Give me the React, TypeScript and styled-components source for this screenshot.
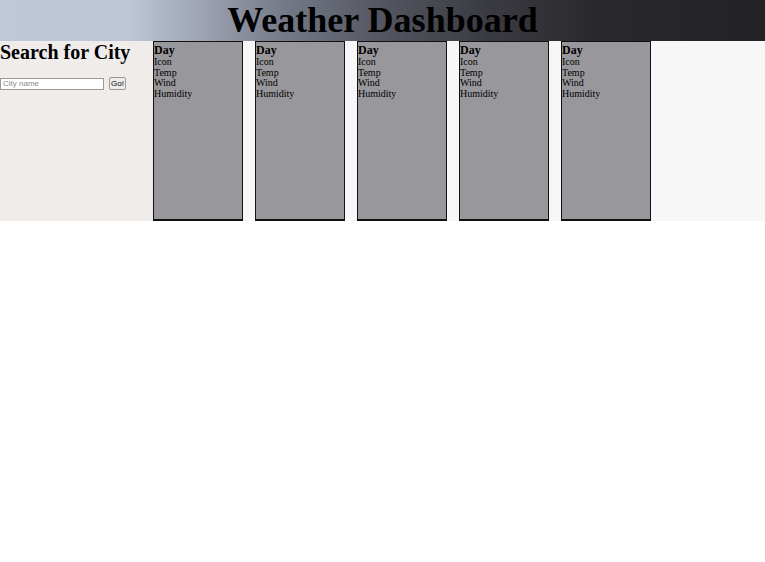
import React from "react";
import styled, { createGlobalStyle } from "styled-components";

const Global = createGlobalStyle`
  html, body { margin: 0; padding: 0; background: #ffffff; }
  body { font-family: "Liberation Serif", "Times New Roman", serif; color: #000; }
  * { box-sizing: border-box; }
`;

const Header = styled.header`
  height: 41px;
  display: flex;
  align-items: center;
  justify-content: center;
  background: linear-gradient(
    90deg,
    #bfc8d9 0%,
    #bdc6d7 17%,
    #9ba1b0 27%,
    #757a88 37%,
    #53565f 50%,
    #3a3b41 64%,
    #29292d 78%,
    #232325 100%
  );
`;

const Title = styled.h1`
  margin: 0;
  font-family: "Liberation Serif", "Times New Roman", serif;
  font-size: 36px;
  font-weight: bold;
  line-height: 41px;
  color: #000;
`;

const Body = styled.div`
  display: flex;
  height: 180px;
`;

const Sidebar = styled.aside`
  width: 153px;
  flex: 0 0 153px;
  background: #f0ecea;
  display: flex;
  flex-direction: column;
`;

const SideHeading = styled.h2`
  margin: 0;
  font-size: 20px;
  font-weight: bold;
  line-height: 23px;
`;

const SearchForm = styled.form`
  display: flex;
  align-items: center;
  gap: 5px;
  margin-top: 13px;
`;

const CityInput = styled.input`
  width: 104px;
  height: 12px;
  padding: 0 2px;
  border: 1px solid #9a9a9a;
  background: #fff;
  font-family: "Liberation Sans", Arial, sans-serif;
  font-size: 8px;
  outline: none;
  &::placeholder { color: #8a8a8a; }
`;

const GoButton = styled.button`
  height: 13px;
  width: 17px;
  padding: 0;
  border: 1px solid #9a9a9a;
  border-radius: 2px;
  background: #ececec;
  font-family: "Liberation Sans", Arial, sans-serif;
  font-size: 8px;
  line-height: 11px;
  color: #000;
`;

const Forecast = styled.main`
  flex: 1;
  display: flex;
  gap: 12px;
  background: #f7f7f7;
`;

const Card = styled.section`
  width: 90px;
  height: 180px;
  background: #98979b;
  border: 1px solid #111;
  border-bottom-width: 2px;
  display: flex;
  flex-direction: column;
  padding-top: 1px;
`;

const DayLabel = styled.div`
  font-size: 12px;
  font-weight: bold;
  line-height: 14px;
`;

const Field = styled.div`
  font-size: 10px;
  line-height: 10.7px;
`;

const days = [0, 1, 2, 3, 4];

export default function App() {
  return (
    <>
      <Global />
      <Header>
        <Title>Weather Dashboard</Title>
      </Header>
      <Body>
        <Sidebar>
          <SideHeading>Search for City</SideHeading>
          <SearchForm onSubmit={(e) => e.preventDefault()}>
            <CityInput placeholder="City name" />
            <GoButton type="submit">Go!</GoButton>
          </SearchForm>
        </Sidebar>
        <Forecast>
          {days.map((d) => (
            <Card key={d}>
              <DayLabel>Day</DayLabel>
              <Field>Icon</Field>
              <Field>Temp</Field>
              <Field>Wind</Field>
              <Field>Humidity</Field>
            </Card>
          ))}
        </Forecast>
      </Body>
    </>
  );
}
